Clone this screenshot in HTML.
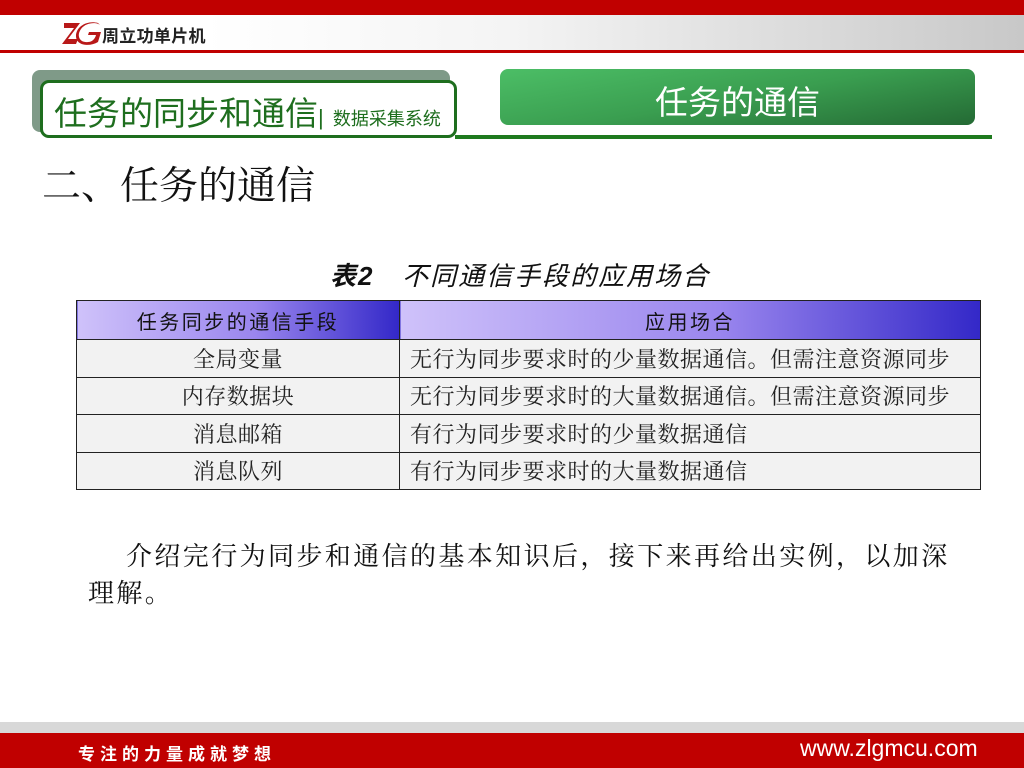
<!DOCTYPE html>
<html><head><meta charset="utf-8"><style>
*{margin:0;padding:0;box-sizing:border-box}
body{width:1024px;height:768px;position:relative;overflow:hidden;background:#fff;font-family:"Liberation Serif","Noto Serif CJK SC",serif}
.a{position:absolute}
.sans{font-family:"Liberation Sans","Noto Sans CJK SC",sans-serif}
table{position:absolute;left:76px;top:300px;width:905px;border-collapse:collapse}
td{border:1.5px solid #222;height:37.5px;font-size:22px;letter-spacing:0.5px;color:#222;background:#f2f2f2;padding:0 10px;white-space:nowrap}
td.c{text-align:center}
th{border:1.5px solid #222;height:39px;font-size:20px;letter-spacing:2.5px;font-weight:normal;color:#111;font-family:"Liberation Sans","Noto Sans CJK SC",sans-serif;background:linear-gradient(90deg,#cfc2fa,#9a86ee 55%,#3328c8)}
</style></head><body>
<div class="a" style="left:0;top:0;width:1024px;height:15px;background:#c00000"></div>
<div class="a" style="left:0;top:15px;width:1024px;height:35px;background:linear-gradient(90deg,#fff 0,#fff 20%,#f4f4f4 50%,#c8c8c8 100%)"></div>
<div class="a" style="left:0;top:50px;width:1024px;height:3px;background:#c00000"></div>
<svg class="a" style="left:62px;top:19px" width="40" height="28" viewBox="0 0 40 28"><path d="M2 4h16l-12 16h10l-2 5H0l12-16H2z" fill="#b81818"/><path d="M38 6c-3-3-14-3-19 4s-1 14 7 13c4 0 7-3 8-7h-8l1-3h12l-3 10c-8 5-22 4-22-6s12-16 22-13z" fill="#b81818"/></svg>
<div class="a sans" style="left:102px;top:22px;font-size:17px;font-weight:bold;color:#222;letter-spacing:0.3px">周立功单片机</div>

<div class="a" style="left:32px;top:70px;width:418px;height:62px;background:#7f9a88;border-radius:8px"></div>
<div class="a" style="left:40px;top:80px;width:417px;height:58px;background:#fff;border:3px solid #1e6e1e;border-radius:9px"></div>
<div class="a sans" style="left:54px;top:87px;font-size:33px;color:#1e6e1e;white-space:nowrap">任务的同步和通信<span style="font-size:22px">|</span> <span style="font-size:18px">数据采集系统</span></div>

<div class="a" style="left:500px;top:69px;width:475px;height:56px;border-radius:8px;background:linear-gradient(170deg,#4cbe66,#3a9e50 50%,#246a34)"></div>
<div class="a sans" style="left:500px;top:76px;width:475px;text-align:center;font-size:33px;color:#fff">任务的通信</div>
<div class="a" style="left:455px;top:135px;width:537px;height:4px;background:#1e7a1e"></div>

<div class="a" style="left:42px;top:155px;font-size:39px;color:#111">二、任务的通信</div>
<div class="a sans" style="left:330px;top:256px;font-size:26px;letter-spacing:2px;font-style:italic;color:#111;white-space:nowrap"><b>表2</b>&nbsp;&nbsp; 不同通信手段的应用场合</div>

<table>
<tr><th style="width:323px">任务同步的通信手段</th><th>应用场合</th></tr>
<tr><td class="c">全局变量</td><td>无行为同步要求时的少量数据通信。但需注意资源同步</td></tr>
<tr><td class="c">内存数据块</td><td>无行为同步要求时的大量数据通信。但需注意资源同步</td></tr>
<tr><td class="c">消息邮箱</td><td>有行为同步要求时的少量数据通信</td></tr>
<tr><td class="c">消息队列</td><td>有行为同步要求时的大量数据通信</td></tr>
</table>

<div class="a" style="left:88px;top:538px;width:870px;font-size:26px;letter-spacing:2.4px;line-height:37px;color:#111;text-indent:38px">介绍完行为同步和通信的基本知识后，接下来再给出实例，以加深理解。</div>

<div class="a" style="left:0;top:722px;width:1024px;height:12px;background:#d8d8d8"></div>
<div class="a" style="left:0;top:733px;width:1024px;height:35px;background:#c00000"></div>
<div class="a sans" style="left:78px;top:740px;font-size:17px;font-weight:bold;color:#fff;letter-spacing:5px">专注的力量成就梦想</div>
<div class="a sans" style="left:800px;top:735px;font-size:23px;color:#fff">www.zlgmcu.com</div>
</body></html>
